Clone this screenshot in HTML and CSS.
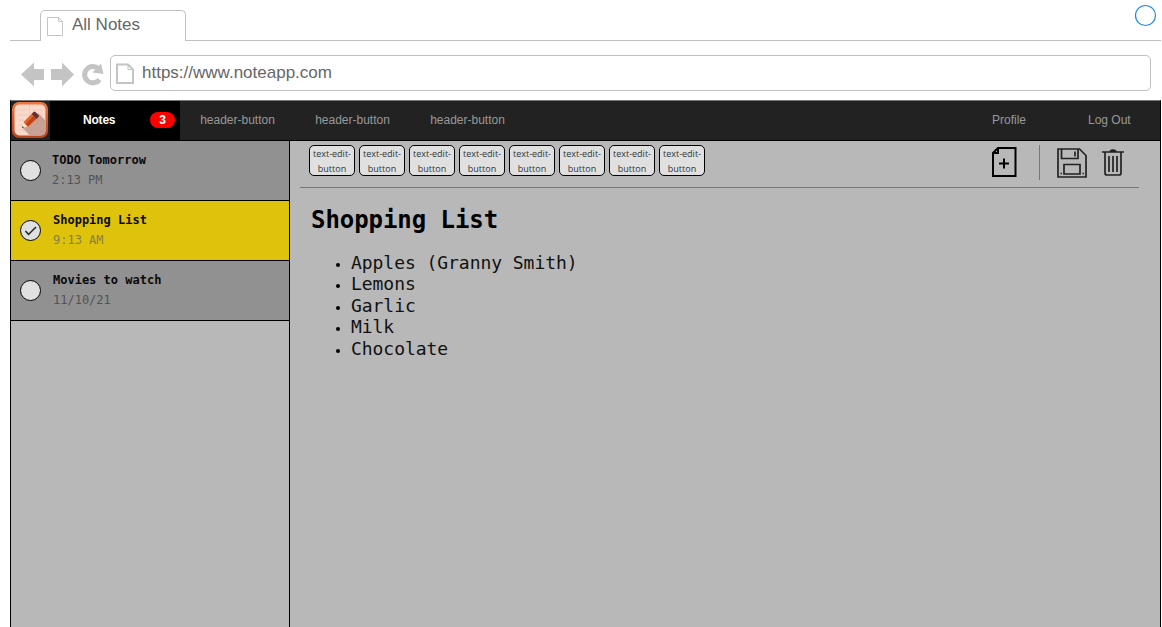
FILE: index.html
```html
<!DOCTYPE html>
<html lang="en">
<head>
<meta charset="utf-8">
<title>All Notes</title>
<link rel="stylesheet" href="styles.css">
</head>
<body>
<div class="tabs">
  <div class="tab">
    <svg class="tab-icon" width="17" height="20" viewBox="0 0 17 20"><path d="M.5.5h11l4 4v14H.5zM11.5.5v4h4" fill="none" stroke="#c4c4c4"/></svg>
    <span>All Notes</span>
  </div>
  <div class="tab-line"></div>
  <svg class="menu-ring" width="23" height="23" viewBox="0 0 23 23"><circle cx="11.5" cy="11.5" r="10" fill="#fff" stroke="#1e88e5" stroke-width="1.2"/></svg>
</div>
<div class="toolbar">
  <svg class="nav" width="88" height="26" viewBox="0 0 88 26"><g fill="#c4c4c4"><path d="M0 12.500 13 .500v6.500h10v11H13v6.500z"/><path d="M53 12.500 41 .500v6.500H30v11h11v6.500z"/></g><path d="M78.500 17.500A8.200 8.200 0 1 1 77.500 6.700" fill="none" stroke="#c4c4c4" stroke-width="5"/><path d="M80 1.500 82.500 12l-11-1.500z" fill="#c4c4c4"/></svg>
  <div class="address">
    <svg width="19" height="22" viewBox="0 0 19 22"><path d="M1 1.500h11l5 5v13.500H1z" fill="none" stroke="#c4c4c4" stroke-width="2"/><path d="M12 1.500v5h5" fill="none" stroke="#c4c4c4"/></svg>
    <span>https://www.noteapp.com</span>
  </div>
</div>
<div class="app">
  <header class="header">
    <div class="logo"><svg width="38" height="38" viewBox="0 0 38 38">
      <defs><linearGradient id="rim" x1="0" y1="0" x2="0" y2="1"><stop offset="0" stop-color="#ee7744"/><stop offset="1" stop-color="#b8431d"/></linearGradient></defs>
      <rect x="1" y="1" width="36" height="36" rx="7" fill="url(#rim)"/><rect x="3.500" y="3.500" width="31" height="31" rx="5" fill="#fbd9c9"/>
      <path d="M7 9h10M21 9h10M7 14h10M21 14h10M7 19h6M7 24h5M7 29h9M18.500 4v30" stroke="#eccabb" fill="none"/>
      <path d="m27 12 7.500 7.500V30q0 4.500-4.500 4.500H19l-8-8z" fill="#c7a294"/>
      <path d="m11 27 1.500-6 4.500 4.500z" fill="#fae3ba"/><path d="m12.500 21 8-8 5 5-8.500 8z" fill="#e96328"/><path d="m14.500 23 8-8 2.500 2.500-8 8z" fill="#b9451f"/><path d="m20.500 13 2-2q1-1 2 0l3 3q1 1 0 2l-2 2z" fill="#6b2e2b"/><path d="m11 27 .5-2 1.500 1.500z" fill="#333"/></svg></div>
    <div class="notes-tab"><b>Notes</b><span class="badge">3</span></div>
    <span class="head-link">header-button</span><span class="head-link">header-button</span><span class="head-link">header-button</span>
    <span class="profile">Profile</span><span class="logout">Log Out</span>
  </header>
  <main class="main">
    <aside class="sidebar">
      <div class="note"><i class="dot"></i><div><b>TODO Tomorrow</b><small>2:13 PM</small></div></div>
      <div class="note selected"><i class="dot"><svg width="19" height="19" viewBox="0 0 19 19"><path d="m4.500 10 3 3.500 7.500-7.500" fill="none" stroke="#222" stroke-width="1.500"/></svg></i><div><b>Shopping List</b><small>9:13 AM</small></div></div>
      <div class="note"><i class="dot"></i><div><b>Movies to watch</b><small>11/10/21</small></div></div>
    </aside>
    <section class="editor">
      <div class="tools">
        <div class="buttons">
          <button>text-edit-<br>button</button><button>text-edit-<br>button</button><button>text-edit-<br>button</button><button>text-edit-<br>button</button><button>text-edit-<br>button</button><button>text-edit-<br>button</button><button>text-edit-<br>button</button><button>text-edit-<br>button</button>
        </div>
        <svg class="new-icon" width="26" height="32" viewBox="0 0 26 32"><path d="M7 2h17.500v28H2V7zM7 2v5H2M13 12.500v10M8 17.500h10" fill="none" stroke="#000" stroke-width="2"/></svg>
        <i class="divider"></i>
        <svg class="save-icon" width="30" height="30" viewBox="0 0 30 30"><g fill="none" stroke="#222" stroke-width="1.700"><path d="M1 1h21.500l6.500 6.500V29H1zM4.500 1v9.500H21V1M7 16.500h16v9.500H7z"/><path d="M18 3.500v5M3.500 25.500h1.500M25.500 25.500H27"/></g></svg>
        <svg class="trash-icon" width="22" height="28" viewBox="0 0 22 28"><g fill="none" stroke="#222" stroke-width="1.700"><path d="M0 3h22M8 2.500q3-2.500 6 0M3 3v21q0 2 2 2h12q2 0 2-2V3"/><path d="M7 7v16M11 7v16M15 7v16"/></g></svg>
      </div>
      <h1>Shopping List</h1>
      <ul><li>Apples (Granny Smith)</li><li>Lemons</li><li>Garlic</li><li>Milk</li><li>Chocolate</li></ul>
    </section>
  </main>
</div>
</body>
</html>
```
FILE: styles.css
```css
* { box-sizing: border-box; }
body { margin: 0; height: 627px; overflow: hidden; background: #fff; display: flex; flex-direction: column; font-family: "Liberation Sans", Arial, sans-serif; }
svg { display: block; flex: none; }
.tabs { height: 41px; padding: 10px 1px 0 10px; display: flex; flex: none; position: relative; }
.tabs::before { content: ""; width: 30px; border-bottom: 1px solid #c0c0c0; }
.tab { width: 146px; border: 1px solid #c0c0c0; border-bottom: 0; border-radius: 5px 5px 0 0; display: flex; padding: 6px 0 0 6px; font-size: 17px; line-height: 17px; color: #666; }
.tab span { margin-left: 8px; margin-top: -1px; }
.tab-line { flex: 1; border-bottom: 1px solid #c0c0c0; }
.menu-ring { position: absolute; right: 5px; top: 4px; }
.toolbar { height: 59px; flex: none; padding: 14px 11px 0 21px; display: flex; }
.nav { margin: 7px 1px 0 0; }
.address { flex: 1; height: 36px; border: 1px solid #c0c0c0; border-radius: 5px; display: flex; align-items: center; padding-left: 5px; gap: 7px; color: #666; font-size: 17px; }
.address svg { margin-top: 2px; }
.app { flex: 1; margin: 0 1px 0 10px; border: 1px solid #000; border-top-color: #777; border-bottom: 0; display: flex; flex-direction: column; background: #b8b8b8; }
.header { height: 40px; flex: none; background: #222; border-bottom: 1px solid #000; display: flex; color: #999; font: 12px/38px "Liberation Sans", Arial, sans-serif; }
.logo { width: 39px; }
.notes-tab { width: 130px; background: #000; color: #fff; display: flex; align-items: center; padding-left: 33px; }
.notes-tab b { width: 67px; margin-top: -1px; letter-spacing: -.2px; }
.badge { width: 25px; height: 16px; margin-top: -1px; line-height: 16px; border-radius: 8px; background: #f00; text-align: center; font-weight: 700; }
.head-link { width: 115px; text-align: center; }
.profile { margin-left: auto; width: 96px; }
.logout { width: 72px; }
.main { flex: 1; display: flex; }
.sidebar { width: 279px; border-right: 1px solid #000; font-family: "DejaVu Sans Mono", monospace; }
.note { height: 60px; background: #919191; border-bottom: 1px solid #000; display: flex; padding: 9px 0 0 9px; }
.selected { background: #dec20b; }
.dot { width: 21px; height: 21px; margin-top: 10px; border: 1px solid #000; border-radius: 50%; background: #e0e0e0; }
.note div { margin-left: 11px; }
.note + .note div { margin-left: 12px; }
.note b, .note small { display: block; font-size: 12px; line-height: 20px; }
.note b { color: #0a0a0a; }
.note small { color: #535353; }
.selected small { color: #85803f; }
.editor { flex: 1; padding: 0 21px 0 10px; font-family: "DejaVu Sans Mono", monospace; }
.tools { height: 47px; border-bottom: 1px solid #777; display: flex; padding: 4px 0 0 9px; }
.buttons { display: flex; gap: 4px; margin-right: auto; }
.buttons button { width: 46px; height: 31px; padding: 0; border: 1px solid #000; border-radius: 5px; background: #e0e0e0; color: #333; font: 9px/15px "Open Sans", sans-serif; }
.new-icon { margin-top: 1px; }
.divider { width: 1px; height: 35px; margin: 0 17px 0 22px; background: #777; }
.save-icon { margin: 3px 15px 0 0; }
.trash-icon { margin: 4px 15px 0 0; }
h1 { margin: 16px 0 0 11px; font-size: 24px; line-height: 32px; letter-spacing: -.06px; }
ul { margin: 16px 0 0; padding-left: 51px; font-size: 18px; line-height: 21.4px; letter-spacing: -.05px; color: #111; }
li::marker { font-size: 14px; color: #000; }
```
